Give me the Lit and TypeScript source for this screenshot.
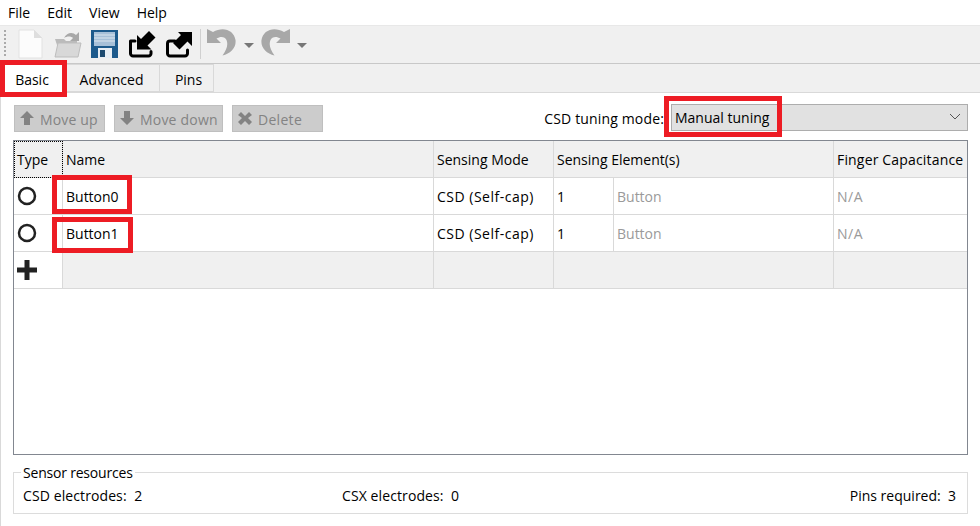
import { LitElement, html, css, svg } from "lit";
import { customElement } from "lit/decorators.js";

const arrowIn = svg`<svg width="28" height="28" viewBox="0 0 28 28"><path d="M2.500 11v12.500a2.500 2.500 0 0 0 2.500 2.500h15.500a2.500 2.500 0 0 0 2.500-2.500V21.500M2.500 11H7" fill="none" stroke="#000" stroke-width="3" stroke-linecap="round"/><path d="M21 1l6.500 6.500-8 8 4 4H9V5l4 4z" fill="#000"/></svg>`;
const arrowOut = svg`<svg width="28" height="28" viewBox="0 0 28 28"><path d="M10 11H5a2.500 2.500 0 0 0-2.500 2.500v10a2.500 2.500 0 0 0 2.500 2.500h15a2.500 2.500 0 0 0 2.500-2.500V20" fill="none" stroke="#000" stroke-width="3" stroke-linecap="round"/><path d="M13 2h14v14l-4.500-4.500-8 8-6.500-6.500 8-8z" fill="#000"/></svg>`;
const hook = "M1 2v14h14l-4.500-4.500c4-2.500 8.500-2 10 1.500 2 5 0 10-4 15.500 8-2 14-8 13-15.500C28 3 17-1 7 5z";
const undo = svg`<svg width="32" height="30" viewBox="0 0 32 30"><path d=${hook} fill="#a8a8a8"/></svg>`;
const redo = svg`<svg width="32" height="30" viewBox="0 0 32 30"><path transform="translate(32 0) scale(-1 1)" d=${hook} fill="#a8a8a8"/></svg>`;

@customElement("app-root")
export class AppRoot extends LitElement {
  static styles = css`
    :host { display: block; width: 980px; height: 526px; position: relative; overflow: hidden; background: #fff; font-family: "Open Sans", "Noto Sans", sans-serif; font-size: 14px; color: #000; }
    .menu { display: flex; height: 25px; align-items: center; padding: 0 0 1px 8px; gap: 17px; box-sizing: border-box; }
    .toolbar { height: 39px; background: #f0f0f0; border-top: 1px solid #e8e8e8; border-bottom: 1px solid #c8c8c8; box-sizing: border-box; display: flex; align-items: center; padding: 0 0 2px 4px; }
    .grip { width: 2px; height: 28px; margin-right: 6px; background-image: repeating-linear-gradient(#aaa 0 2px, transparent 2px 4px); }
    .tool { display: flex; width: 37px; justify-content: center; }
    .sep { width: 1px; height: 30px; background: #d0d0d0; margin: 0 5px 0 3px; }
    .caret { width: 0; height: 0; border: 5px solid transparent; border-top: 5px solid #777; border-bottom: 0; margin: 3px 5px 0 6px; }
    .tabs { display: flex; height: 29px; background: #f0f0f0; border-bottom: 1px solid #d9d9d9; box-sizing: border-box; }
    .tab { display: flex; align-items: center; justify-content: center; height: 28px; box-sizing: border-box; border: 1px solid #d9d9d9; border-left: 0; padding-top: 2px; background: #f0f0f0; }
    .tab.on { background: #fff; width: 64px; height: 29px; border: 0; }
    .adv { width: 96px; } .pins { width: 54px; padding-left: 4px; }
    .body { border-left: 1px solid #d9d9d9; height: 434px; padding: 11px 12px 0 12px; box-sizing: border-box; display: flex; flex-direction: column; }
    .actions { display: flex; align-items: center; height: 28px; margin-bottom: 8px; }
    .btn { height: 27px; box-sizing: border-box; background: #cccccc; border: 1px solid #bfbfbf; color: #838383; display: flex; align-items: center; gap: 5px; padding: 1px 0 0 4px; margin: 1px 9px 0 0; }
    .btn svg { margin-top: -2px; }
    .b1 { width: 91px; margin-left: 1px; letter-spacing: .15px; } .b2 { width: 109px; letter-spacing: .2px; } .b3 { width: 91px; letter-spacing: .3px; }
    .spacer { flex: 1; }
    .label { letter-spacing: .15px; }
    .combo { width: 297px; height: 27px; box-sizing: border-box; background: #e1e1e1; border: 1px solid #adadad; display: flex; align-items: center; padding: 0 6px 0 3px; margin: 0 0 2px 7px; justify-content: space-between; }
    .table { height: 315px; box-sizing: border-box; border: 1px solid #828790; display: grid; grid-template-columns: 49px 371px 120px 60px 220px 1fr; grid-auto-rows: 37px; align-content: start; }
    .c { border-right: 1px solid #d9d9d9; border-bottom: 1px solid #d9d9d9; display: flex; align-items: center; padding-left: 3px; box-sizing: border-box; white-space: nowrap; overflow: hidden; }
    .last { border-right: 0; }
    .h { background: #f0f0f0; }
    .type { outline: 1px dotted #000; outline-offset: -1px; }
    .g { background: #f0f0f0; }
    .dim { color: #9a9a9a; }
    .span2 { grid-column: span 2; }
    .wide { letter-spacing: .5px; }
    .fc { letter-spacing: .17px; }
    .res { margin-top: 17px; height: 42px; box-sizing: border-box; border: 1px solid #dcdcdc; position: relative; display: flex; justify-content: space-between; padding: 13px 11px 0 9px; }
    .legend { position: absolute; left: 7px; top: -9px; background: #fff; padding: 0 2px; line-height: 18px; letter-spacing: -.2px; }
    .v { width: 319px; letter-spacing: .1px; }
    .w { flex: 1; letter-spacing: .1px; }
    .mark { position: absolute; border: 5px solid #ed1c24; box-sizing: border-box; }
    .m1 { left: 0; top: 60px; width: 67px; height: 37px; }
    .m2 { left: 664px; top: 96px; width: 118px; height: 41px; }
    .m3 { left: 52px; top: 175px; width: 80px; height: 39px; }
    .m4 { left: 52px; top: 217px; width: 81px; height: 36px; }
  `;

  row(name: string) {
    return html`
      <div class="c"><svg width="20" height="20" viewBox="0 0 20 20"><circle cx="10" cy="10" r="8" fill="none" stroke="#222" stroke-width="2.500"/></svg></div>
      <div class="c">${name}</div>
      <div class="c wide">CSD (Self-cap)</div>
      <div class="c">1</div>
      <div class="c dim">Button</div>
      <div class="c dim last wide">N/A</div>`;
  }

  render() {
    return html`
      <div class="menu"><span>File</span><span>Edit</span><span>View</span><span>Help</span></div>
      <div class="toolbar">
        <div class="grip"></div>
        <div class="tool"><svg width="25" height="30" viewBox="0 0 25 30"><path d="M1 1h15l8 8v20H1z" fill="#fcfcfc" stroke="#e2e2e2"/><path d="M16 1v8h8z" fill="#dedede"/></svg></div>
        <div class="tool"><svg width="29" height="28" viewBox="0 0 29 28"><path d="M2 9h9l2 2h11v4H4z" fill="#bbb"/><path d="M5 13h23l-3 14H2z" fill="#d8d8d8" stroke="#bdbdbd"/><path d="M11 8c3-6 9-6 12-3l3-3v9h-9l3-3c-2-2-6-2-9 0z" fill="#a8a8a8"/></svg></div>
        <div class="tool"><svg width="27" height="28" viewBox="0 0 27 28"><path d="M0 0h27v28H0z" fill="#1d5a8c"/><path d="M3 2h21v14H3z" fill="#a7c0d8"/><path d="M3 5h21M3 8h21M3 11h21" stroke="#dce6ef" stroke-width="1"/><path d="M7 18h14v10H7z" fill="#e8eef4"/><path d="M9 20h5v7H9z" fill="#1d4a70"/></svg></div>
        <div class="tool">${arrowIn}</div>
        <div class="tool">${arrowOut}</div>
        <div class="sep"></div>
        <div>${undo}</div><div class="caret"></div>
        <div>${redo}</div><div class="caret"></div>
      </div>
      <div class="tabs">
        <div class="tab on">Basic</div><div class="tab adv">Advanced</div><div class="tab pins">Pins</div>
      </div>
      <div class="body">
        <div class="actions">
          <div class="btn b1"><svg width="16" height="16" viewBox="0 0 16 16"><path d="M8 1l7 7h-4v7H5V8H1z" fill="#838383"/></svg>Move up</div>
          <div class="btn b2"><svg width="16" height="16" viewBox="0 0 16 16"><path d="M8 15l7-7h-4V1H5v7H1z" fill="#838383"/></svg>Move down</div>
          <div class="btn b3"><svg width="16" height="16" viewBox="0 0 16 16"><path d="M4 2l4 4 4-4 3 3-4 3 4 4-3 3-4-4-4 4-3-3 4-4-4-3z" fill="#838383"/></svg>Delete</div>
          <div class="spacer"></div>
          <span class="label">CSD tuning mode:</span>
          <div class="combo"><span>Manual tuning</span><svg width="12" height="8" viewBox="0 0 12 8"><path d="M1 1l5 5 5-5" fill="none" stroke="#555" stroke-width="1"/></svg></div>
        </div>
        <div class="table">
          <div class="c h type">Type</div><div class="c h">Name</div><div class="c h">Sensing Mode</div><div class="c h span2">Sensing Element(s)</div><div class="c h last fc">Finger Capacitance</div>
          ${this.row("Button0")}
          ${this.row("Button1")}
          <div class="c"><svg width="20" height="20" viewBox="0 0 20 20"><path d="M7.500 0h5v7.500H20v5h-7.500V20h-5v-7.500H0v-5h7.500z" fill="#222"/></svg></div>
          <div class="c g"></div><div class="c g"></div><div class="c g span2"></div><div class="c g last"></div>
        </div>
        <div class="res">
          <span class="legend">Sensor resources</span>
          <div class="v">CSD electrodes:&nbsp; 2</div>
          <div class="w">CSX electrodes:&nbsp; 0</div>
          <div>Pins required:&nbsp; 3</div>
        </div>
      </div>
      <div class="mark m1"></div>
      <div class="mark m2"></div>
      <div class="mark m3"></div>
      <div class="mark m4"></div>
    `;
  }
}
